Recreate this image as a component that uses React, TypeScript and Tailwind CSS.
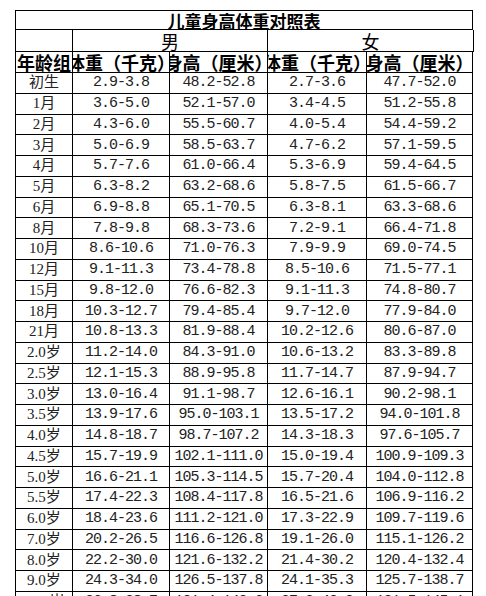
const rows: string[][] = [
  ['初生', '2.9-3.8', '48.2-52.8', '2.7-3.6', '47.7-52.0'],
  ['1月', '3.6-5.0', '52.1-57.0', '3.4-4.5', '51.2-55.8'],
  ['2月', '4.3-6.0', '55.5-60.7', '4.0-5.4', '54.4-59.2'],
  ['3月', '5.0-6.9', '58.5-63.7', '4.7-6.2', '57.1-59.5'],
  ['4月', '5.7-7.6', '61.0-66.4', '5.3-6.9', '59.4-64.5'],
  ['5月', '6.3-8.2', '63.2-68.6', '5.8-7.5', '61.5-66.7'],
  ['6月', '6.9-8.8', '65.1-70.5', '6.3-8.1', '63.3-68.6'],
  ['8月', '7.8-9.8', '68.3-73.6', '7.2-9.1', '66.4-71.8'],
  ['10月', '8.6-10.6', '71.0-76.3', '7.9-9.9', '69.0-74.5'],
  ['12月', '9.1-11.3', '73.4-78.8', '8.5-10.6', '71.5-77.1'],
  ['15月', '9.8-12.0', '76.6-82.3', '9.1-11.3', '74.8-80.7'],
  ['18月', '10.3-12.7', '79.4-85.4', '9.7-12.0', '77.9-84.0'],
  ['21月', '10.8-13.3', '81.9-88.4', '10.2-12.6', '80.6-87.0'],
  ['2.0岁', '11.2-14.0', '84.3-91.0', '10.6-13.2', '83.3-89.8'],
  ['2.5岁', '12.1-15.3', '88.9-95.8', '11.7-14.7', '87.9-94.7'],
  ['3.0岁', '13.0-16.4', '91.1-98.7', '12.6-16.1', '90.2-98.1'],
  ['3.5岁', '13.9-17.6', '95.0-103.1', '13.5-17.2', '94.0-101.8'],
  ['4.0岁', '14.8-18.7', '98.7-107.2', '14.3-18.3', '97.6-105.7'],
  ['4.5岁', '15.7-19.9', '102.1-111.0', '15.0-19.4', '100.9-109.3'],
  ['5.0岁', '16.6-21.1', '105.3-114.5', '15.7-20.4', '104.0-112.8'],
  ['5.5岁', '17.4-22.3', '108.4-117.8', '16.5-21.6', '106.9-116.2'],
  ['6.0岁', '18.4-23.6', '111.2-121.0', '17.3-22.9', '109.7-119.6'],
  ['7.0岁', '20.2-26.5', '116.6-126.8', '19.1-26.0', '115.1-126.2'],
  ['8.0岁', '22.2-30.0', '121.6-132.2', '21.4-30.2', '120.4-132.4'],
  ['9.0岁', '24.3-34.0', '126.5-137.8', '24.1-35.3', '125.7-138.7'],
  ['10.0岁', '26.8-38.7', '131.4-143.6', '27.2-40.9', '131.5-145.1'],
];

const cell = 'flex items-center justify-center whitespace-nowrap border-r border-b border-black';
const cols = 'grid grid-cols-[57px_97px_98px_99px_106px]';
const cjk = "font-['Noto_Sans_CJK_SC',sans-serif] leading-none text-black";

function HeaderRow() {
  const head = `${cjk} overflow-x-clip text-[18px] font-bold`;
  return (
    <div className={`${cols} h-[21px]`}>
      <div className={`${cell} ${head}`}>年龄组</div>
      <div className={`${cell} ${head}`}>体重（千克）</div>
      <div className={`${cell} ${head}`}>身高（厘米）</div>
      <div className={`${cell} ${head}`}>体重（千克）</div>
      <div className={`${cell} ${head}`}>身高（厘米）</div>
    </div>
  );
}

function DataRow({ row }: { row: string[] }) {
  const [age, ...values] = row;
  return (
    <div className={`${cols} h-[20.76px]`}>
      <div className={`${cell} font-['Liberation_Serif','Noto_Sans_CJK_SC',serif] text-[15px] leading-none text-[#222]`}>
        {age}
      </div>
      {values.map((v, i) => (
        <div
          key={i}
          className={`${cell} font-['Liberation_Mono',monospace] text-[15px] tracking-[-1px] leading-none text-[#222]`}
        >
          {v}
        </div>
      ))}
    </div>
  );
}

export default function App() {
  return (
    <div className="w-[486px] h-[596px] overflow-hidden bg-white pt-[10px] pl-[15px]">
      <div className="w-[458px] border-l border-t border-black">
        {/* Title */}
        <div className={`${cell} ${cjk} h-[19px] text-[17px] font-bold`}>儿童身高体重对照表</div>

        {/* Gender row */}
        <div className="grid grid-cols-[57px_195px_206px] h-[22px]">
          <div className={cell} />
          <div className={`${cell} ${cjk} text-[18px]`}>男</div>
          <div className={`${cell} ${cjk} text-[18px]`}>女</div>
        </div>

        <HeaderRow />

        {rows.map((row) => (
          <DataRow key={row[0]} row={row} />
        ))}
      </div>
    </div>
  );
}
